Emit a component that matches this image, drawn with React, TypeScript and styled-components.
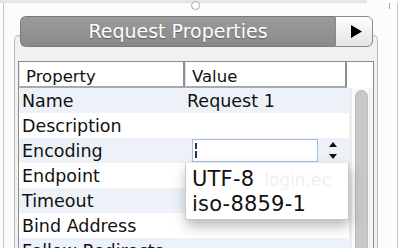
import React from "react";
import styled, { createGlobalStyle } from "styled-components";

const GlobalStyle = createGlobalStyle`
  html, body {
    margin: 0;
    padding: 0;
    background: #fcfcfc;
  }

  body {
    font-family: "DejaVu Sans", "Liberation Sans", sans-serif;
    color: #111;
  }
`;

const Page = styled.div`
  width: 399px;
  height: 248px;
  overflow: hidden;
  display: flex;
  flex-direction: column;
  background: #fcfcfc;
`;

const TopStrip = styled.div`
  position: relative;
  flex: none;
  width: 367px;
  height: 3px;
  background: #e8e8e8;
  border-bottom: 1px solid #dedede;
  box-sizing: border-box;
`;

const Handle = styled.span`
  position: absolute;
  left: 191px;
  top: 1px;
  width: 7px;
  height: 7px;
  border-radius: 50%;
  border: 1px solid #a8a8a8;
  background: #fff;
`;

const Tick = styled.span`
  position: absolute;
  left: 389px;
  top: 3px;
  width: 1px;
  height: 6px;
  background: #a8a8a8;
`;

const Frame = styled.div`
  flex: 1;
  width: 395px;
  margin-left: 3px;
  box-sizing: border-box;
  border-left: 1px solid #c4c4c4;
  border-right: 1px solid #c4c4c4;
  padding: 13px 19px 0 10px;
  min-height: 0;
`;

const PanelWrap = styled.div`
  width: 364px;
`;

const Tab = styled.div`
  position: relative;
  z-index: 1;
  display: flex;
  height: 31px;
  margin: 0 5px 0 6px;
`;

const TabLabel = styled.div`
  flex: 1;
  box-sizing: border-box;
  border: 1px solid #7a7a7a;
  border-right: none;
  border-radius: 6px 0 0 6px;
  background: linear-gradient(#9b9b9b, #8a8a8a);
  color: #fff;
  font-size: 19px;
  line-height: 29px;
  text-align: center;
  text-shadow: 0 1px 1px rgba(0, 0, 0, 0.35);
`;

const TabButton = styled.div`
  width: 38px;
  box-sizing: border-box;
  border: 1px solid #8a8a8a;
  border-radius: 0 6px 6px 0;
  background: linear-gradient(#fefefe, #e4e4e4);
  display: flex;
  align-items: center;
  justify-content: center;
  padding-left: 4px;
`;

const Panel = styled.div`
  margin-top: -12px;
  box-sizing: border-box;
  border: 1px solid #b8b8b8;
  border-bottom: none;
  border-radius: 5px 5px 0 0;
  background: #f1f1f1;
  padding: 25px 3px 0 3px;
`;

const Table = styled.div`
  border: 1px solid #8c8c8c;
  background: #fff;
  display: flex;
  flex-direction: column;
`;

const HeaderRow = styled.div`
  display: flex;
  height: 26px;
`;

const HeaderCell = styled.div<{ $w: number }>`
  width: ${(p) => p.$w}px;
  box-sizing: border-box;
  border-left: 1px solid #e2e2e2;
  border-right: 2px solid #8e8e8e;
  border-bottom: 2px solid #a9a9a9;
  padding: 5px 0 0 6px;
  font-size: 16.5px;
  line-height: 19px;
`;

const HeaderCorner = styled.div`
  flex: 1;
`;

const Body = styled.div`
  display: flex;
`;

const RowList = styled.div`
  width: 330px;
`;

const Row = styled.div<{ $alt?: boolean }>`
  display: flex;
  height: 25px;
  background: ${(p) => (p.$alt ? "#edf2f8" : "#fff")};
  font-size: 17.5px;
`;

const Cell = styled.div`
  width: 165px;
  box-sizing: border-box;
  padding: 2px 0 0 3px;
  line-height: 23px;
  white-space: nowrap;
`;

const ValueCell = styled.div`
  position: relative;
  flex: 1;
  box-sizing: border-box;
  padding: 2px 0 0 3px;
  line-height: 23px;
  white-space: nowrap;
`;

const EditCell = styled.div`
  position: relative;
  flex: 1;
  display: flex;
  align-items: center;
`;

const Editor = styled.div`
  width: 126px;
  height: 23px;
  margin-left: 8px;
  box-sizing: border-box;
  border: 1px solid #a3bedc;
  background: #fff;
  display: flex;
  align-items: center;
  padding-left: 2px;
`;

const Caret = styled.span`
  width: 2px;
  height: 15px;
  background: linear-gradient(#333 0 6px, transparent 6px 8px, #333 8px);
`;

const Spinner = styled.svg`
  margin-left: 11px;
`;

const Menu = styled.div`
  position: absolute;
  z-index: 2;
  left: 1px;
  top: 25px;
  width: 164px;
  height: 57px;
  box-sizing: border-box;
  padding-top: 4px;
  background: #fff;
  border: 1px solid #c9c9c9;
  border-top: none;
  box-shadow: 1px 6px 12px rgba(0, 0, 0, 0.28);
`;

const MenuItem = styled.div`
  height: 25px;
  padding-left: 6px;
  font-size: 21px;
  line-height: 25px;
  letter-spacing: 0.2px;
  white-space: nowrap;
  color: #111;
`;

const Ghost = styled.span`
  margin-left: 10px;
  font-size: 17px;
  letter-spacing: 0;
  color: #f0f0f0;
`;

const ScrollTrack = styled.div`
  flex: 1;
  box-sizing: border-box;
  border-left: 3px solid #ececec;
  border-right: 5px solid #f4f4f4;
  padding: 2px 0 0 3px;
  background: #fafafa;
`;

const Thumb = styled.div`
  width: 13px;
  height: 200px;
  box-sizing: border-box;
  border: 1px solid #bcbcbc;
  border-bottom: none;
  border-radius: 7px 7px 0 0;
  background: #c8c8c8;
`;

const properties = [
  { name: "Name", value: "Request 1" },
  { name: "Description", value: "" },
  { name: "Encoding", value: null },
  { name: "Endpoint", value: "" },
  { name: "Timeout", value: "" },
  { name: "Bind Address", value: "" },
  { name: "Follow Redirects", value: "" },
];

const App = () => {
  return (
    <>
      <GlobalStyle />
      <Page>
        <TopStrip>
          <Handle />
          <Tick />
        </TopStrip>

        <Frame>
          <PanelWrap>
            <Tab>
              <TabLabel>Request Properties</TabLabel>
              <TabButton>
                <svg width="11" height="13" viewBox="0 0 11 13">
                  <polygon points="0,0 11,6.5 0,13" fill="#000" />
                </svg>
              </TabButton>
            </Tab>

            <Panel>
              <Table>
                <HeaderRow>
                  <HeaderCell $w={166}>Property</HeaderCell>
                  <HeaderCell $w={162}>Value</HeaderCell>
                  <HeaderCorner />
                </HeaderRow>

                <Body>
                  <RowList>
                    {properties.map((prop, i) => (
                      <Row key={prop.name} $alt={i % 2 === 0}>
                        <Cell>{prop.name}</Cell>
                        {prop.value === null ? (
                          <EditCell>
                            <Editor>
                              <Caret />
                            </Editor>
                            <Spinner width="8" height="18" viewBox="0 0 8 18">
                              <polygon points="4,0 8,5 0,5" fill="#111" />
                              <polygon points="0,12 8,12 4,17" fill="#111" />
                            </Spinner>
                            <Menu>
                              <MenuItem>
                                UTF-8<Ghost>login.ec</Ghost>
                              </MenuItem>
                              <MenuItem>iso-8859-1</MenuItem>
                            </Menu>
                          </EditCell>
                        ) : (
                          <ValueCell>{prop.value}</ValueCell>
                        )}
                      </Row>
                    ))}
                  </RowList>

                  <ScrollTrack>
                    <Thumb />
                  </ScrollTrack>
                </Body>
              </Table>
            </Panel>
          </PanelWrap>
        </Frame>
      </Page>
    </>
  );
};

export default App;
